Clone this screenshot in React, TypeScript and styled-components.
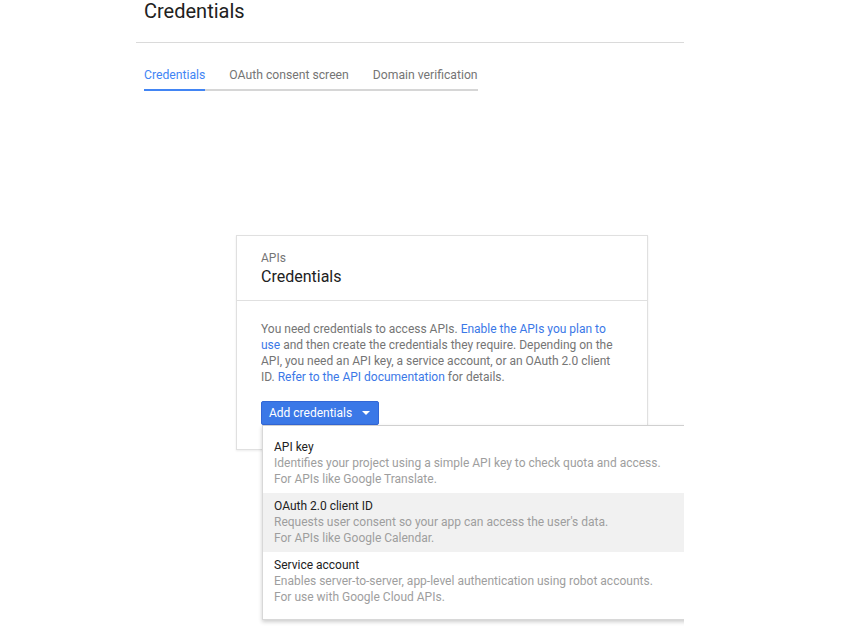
import React from "react";
import styled, { createGlobalStyle } from "styled-components";

const Global = createGlobalStyle`
  html, body { margin: 0; padding: 0; background: #fff; }
  body { font-family: Roboto, "Noto Sans", Arial, sans-serif; -webkit-font-smoothing: antialiased; }
  * { box-sizing: border-box; }
`;

const Page = styled.div`
  margin-left: 136px;
  width: 548px;
  height: 634px;
  overflow: hidden;
`;

const Header = styled.div`
  height: 43px;
  border-bottom: 1px solid #dadada;
  padding-left: 8px;
`;

const PageTitle = styled.h1`
  margin: 0;
  font-size: 20px;
  line-height: 23px;
  font-weight: 400;
  color: #212121;
`;

const Tabs = styled.div`
  display: inline-flex;
  margin: 24px 0 0 8px;
  border-bottom: 2px solid #d6d6d6;
`;

const Tab = styled.div<{ $active?: boolean; $last?: boolean }>`
  font-size: 12.2px;
  line-height: 16px;
  padding-bottom: 6px;
  margin-bottom: -2px;
  margin-right: ${(p) => (p.$last ? "0" : "24px")};
  color: ${(p) => (p.$active ? "#4285f4" : "#757575")};
  border-bottom: 2px solid ${(p) => (p.$active ? "#4285f4" : "transparent")};
`;

const Content = styled.div`
  padding: 144px 0 0 100px;
`;

const Card = styled.div`
  position: relative;
  width: 412px;
  border: 1px solid #e0e0e0;
  box-shadow: 0 1px 2px rgba(0, 0, 0, 0.08);
  background: #fff;
`;

const CardHeader = styled.div`
  padding: 14px 24px 13px 24px;
  border-bottom: 1px solid #e0e0e0;
`;

const Eyebrow = styled.div`
  font-size: 12px;
  line-height: 16px;
  color: #757575;
`;

const CardTitle = styled.div`
  margin-top: 1px;
  font-size: 16px;
  line-height: 20px;
  color: #212121;
`;

const CardBody = styled.div`
  padding: 20px 24px 24px 24px;
`;

const Text = styled.p`
  margin: 0 0 16px;
  font-size: 12px;
  line-height: 16px;
  color: #757575;
`;

const Link = styled.a`
  color: #3b78e7;
  text-decoration: none;
`;

const DropWrap = styled.div`
  position: relative;
  display: inline-block;
`;

const Button = styled.button`
  display: flex;
  align-items: center;
  height: 24px;
  padding: 0 8px 0 7px;
  background: #3b78e7;
  border: 1px solid #3367d6;
  border-radius: 2px;
  color: #fff;
  font-family: inherit;
  font-size: 12px;
  line-height: 16px;
`;

const Caret = styled.span`
  margin-left: 10px;
  width: 0;
  height: 0;
  border-left: 4px solid transparent;
  border-right: 4px solid transparent;
  border-top: 4px solid #fff;
`;

const Menu = styled.div`
  position: absolute;
  top: 24px;
  left: 1px;
  width: 440px;
  padding: 8px 0;
  background: #fff;
  border: 1px solid rgba(0, 0, 0, 0.15);
  border-top-color: #d0d0d0;
  box-shadow: 0 2px 4px rgba(0, 0, 0, 0.2);
  z-index: 2;
`;

const Item = styled.div<{ $hover?: boolean }>`
  padding: 5px 12px 6px 11px;
  background: ${(p) => (p.$hover ? "#f1f1f1" : "transparent")};
`;

const ItemTitle = styled.div`
  font-size: 12px;
  line-height: 16px;
  color: #212121;
`;

const ItemDesc = styled.div`
  font-size: 12px;
  line-height: 16px;
  color: #9e9e9e;
`;

const items = [
  {
    title: "API key",
    lines: [
      "Identifies your project using a simple API key to check quota and access.",
      "For APIs like Google Translate.",
    ],
  },
  {
    title: "OAuth 2.0 client ID",
    lines: [
      "Requests user consent so your app can access the user's data.",
      "For APIs like Google Calendar.",
    ],
    hover: true,
  },
  {
    title: "Service account",
    lines: [
      "Enables server-to-server, app-level authentication using robot accounts.",
      "For use with Google Cloud APIs.",
    ],
  },
];

export default function App() {
  return (
    <>
      <Global />
      <Page>
        <Header>
          <PageTitle>Credentials</PageTitle>
        </Header>
        <Tabs>
          <Tab $active>Credentials</Tab>
          <Tab>OAuth consent screen</Tab>
          <Tab $last>Domain verification</Tab>
        </Tabs>
        <Content>
          <Card>
            <CardHeader>
              <Eyebrow>APIs</Eyebrow>
              <CardTitle>Credentials</CardTitle>
            </CardHeader>
            <CardBody>
              <Text>
                You need credentials to access APIs.{" "}
                <Link href="#">Enable the APIs you plan to use</Link> and then
                create the credentials they require. Depending on the API, you
                need an API key, a service account, or an OAuth 2.0 client ID.{" "}
                <Link href="#">Refer to the API documentation</Link> for
                details.
              </Text>
              <DropWrap>
                <Button>
                  Add credentials
                  <Caret />
                </Button>
                <Menu>
                  {items.map((it) => (
                    <Item key={it.title} $hover={it.hover}>
                      <ItemTitle>{it.title}</ItemTitle>
                      {it.lines.map((l) => (
                        <ItemDesc key={l}>{l}</ItemDesc>
                      ))}
                    </Item>
                  ))}
                </Menu>
              </DropWrap>
            </CardBody>
          </Card>
        </Content>
      </Page>
    </>
  );
}
